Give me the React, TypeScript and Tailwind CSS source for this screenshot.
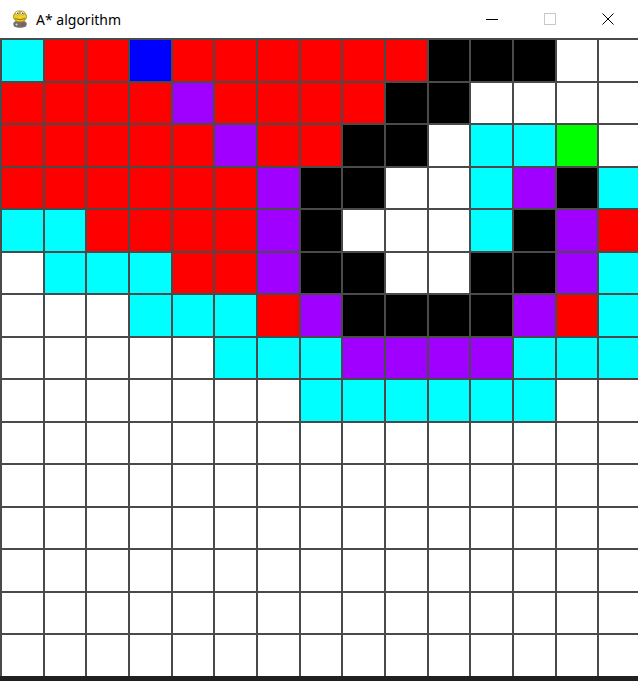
// one letter per cell: c cyan, r red, b blue, p purple, k black (barrier), g green, w white
const ROWS = [
  'crrbrrrrrrkkkww',
  'rrrrprrrrkkwwww',
  'rrrrrprrkkwccgw',
  'rrrrrrpkkwwcpkc',
  'ccrrrrpkwwwckpr',
  'wcccrrpkkwwkkpc',
  'wwwcccrpkkkkprc',
  'wwwwwcccppppccc',
  'wwwwwwwccccccww',
  'wwwwwwwwwwwwwww',
  'wwwwwwwwwwwwwww',
  'wwwwwwwwwwwwwww',
  'wwwwwwwwwwwwwww',
  'wwwwwwwwwwwwwww',
  'wwwwwwwwwwwwwww',
]

const FILL: Record<string, string> = {
  c: 'bg-[#00ffff]',
  r: 'bg-[#ff0000]',
  b: 'bg-[#0000ff]',
  p: 'bg-[#a000ff]',
  k: 'bg-black',
  g: 'bg-[#00ff00]',
  w: 'bg-white',
}

function PygameIcon() {
  return (
    <svg width="20" height="22" viewBox="0 0 20 22">
      <ellipse cx="10" cy="16" rx="7" ry="4" fill="#8c8c84" />
      <rect x="4" y="14" width="12" height="5" rx="1.5" fill="#6e6e6e" />
      <circle cx="13" cy="16.5" r="1.2" fill="#d33" />
      <circle cx="6.5" cy="16.5" r="1" fill="#ddd" />
      <ellipse cx="10" cy="8.5" rx="6.5" ry="5.5" fill="#f0d020" stroke="#9a8410" strokeWidth="0.9" />
      <circle cx="7.5" cy="5" r="2" fill="#fff" stroke="#9a8410" strokeWidth="0.6" />
      <circle cx="12.5" cy="5" r="2" fill="#fff" stroke="#9a8410" strokeWidth="0.6" />
      <circle cx="7.8" cy="5.3" r="0.8" fill="#222" />
      <circle cx="12.8" cy="5.3" r="0.8" fill="#222" />
      <path d="M5 10.5 Q10 13 15 10.5" stroke="#7a6a10" strokeWidth="0.9" fill="none" />
    </svg>
  )
}

export default function App() {
  return (
    <div className="flex h-[681px] w-[638px] flex-col overflow-hidden bg-white">
      <div className="flex h-[38px] shrink-0 items-center bg-white">
        <div className="flex items-center gap-[6px] pl-[10px]">
          <PygameIcon />
          <span className="text-[14px] text-black [font-family:'Noto_Sans','Open_Sans',sans-serif]">
            A* algorithm
          </span>
        </div>
        <div className="ml-auto flex h-full items-center pr-px">
          <div className="flex h-full w-[58px] items-center justify-center">
            <svg width="12" height="12" viewBox="0 0 12 12">
              <path d="M0 6.5H12" stroke="#000" strokeWidth="1" />
            </svg>
          </div>
          <div className="flex h-full w-[58px] items-center justify-center">
            <svg width="12" height="12" viewBox="0 0 12 12">
              <rect x="0.5" y="0.5" width="11" height="11" stroke="#c8c8c8" strokeWidth="1" fill="none" />
            </svg>
          </div>
          <div className="flex h-full w-[58px] items-center justify-center">
            <svg width="12" height="12" viewBox="0 0 12 12">
              <path d="M0.5 0.5L11.5 11.5M11.5 0.5L0.5 11.5" stroke="#000" strokeWidth="1" />
            </svg>
          </div>
        </div>
      </div>

      <div className="grid h-[638px] w-[640px] shrink-0 grid-cols-[repeat(15,minmax(0,1fr))] grid-rows-[repeat(15,minmax(0,1fr))]">
        {ROWS.flatMap((row, r) =>
          row.split('').map((ch, c) => (
            <div
              key={`${r}-${c}`}
              className={`border-t-2 border-l-2 border-[#4a4a4a] ${FILL[ch]}`}
            />
          )),
        )}
      </div>

      <div className="h-[5px] shrink-0 bg-[#202020]" />
    </div>
  )
}
